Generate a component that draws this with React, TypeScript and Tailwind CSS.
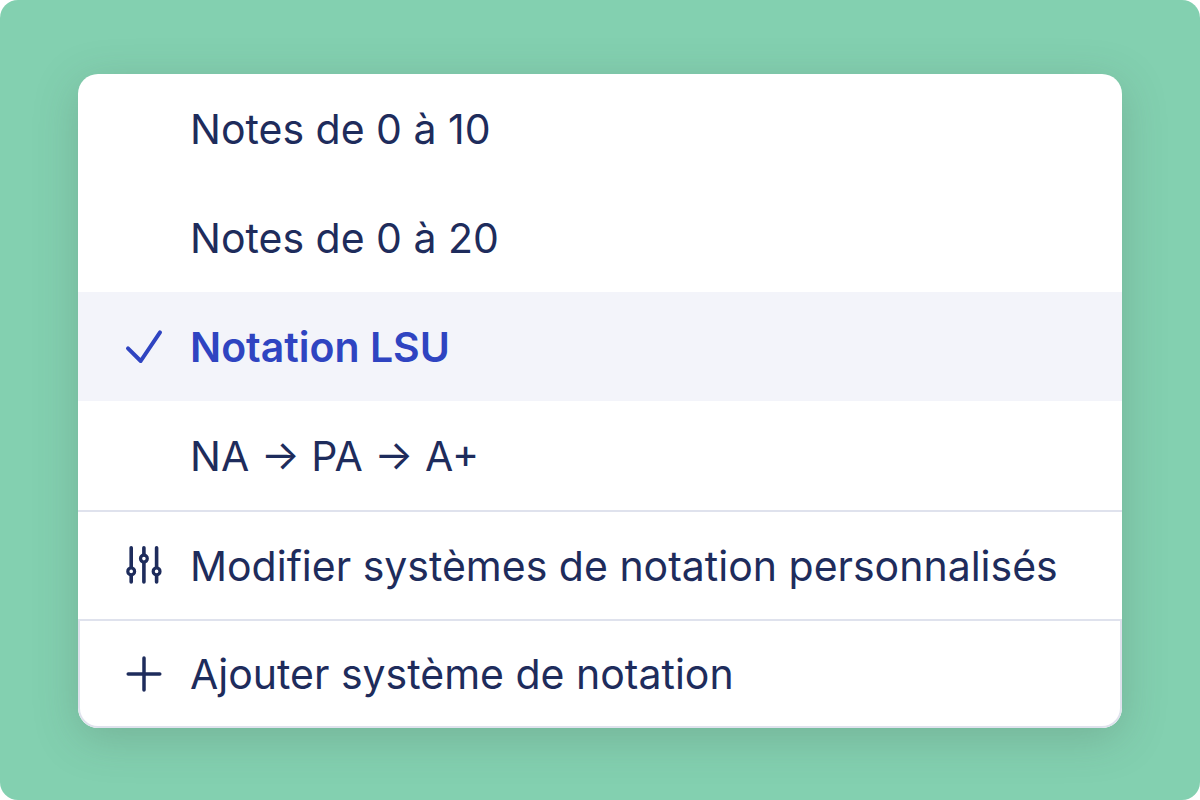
import { useState } from "react";
import type { ReactNode } from "react";
import clsx from "clsx";

const CheckIcon = () => (
  <svg className="size-10" viewBox="0 0 40 40" fill="none" stroke="currentColor" strokeWidth="4" strokeLinecap="round" strokeLinejoin="round" aria-hidden="true">
    <path d="M4 21.3 16.7 34 36 5.4" />
  </svg>
);

const SlidersIcon = () => (
  <svg className="size-10" viewBox="0 0 40 40" fill="none" stroke="currentColor" strokeWidth="3.6" strokeLinecap="round" aria-hidden="true">
    <path d="M7.2 1.8v19.4M7.2 29.5v6.4M19.9 1.8v6.4M19.9 17v18.9M32.6 1.8v19.4M32.6 29.5v6.4" />
    <circle cx="7.2" cy="25.4" r="3.4" strokeWidth="3.2" />
    <circle cx="19.9" cy="12.6" r="3.4" strokeWidth="3.2" />
    <circle cx="32.6" cy="25.4" r="3.4" strokeWidth="3.2" />
  </svg>
);

const PlusIcon = () => (
  <svg className="size-10" viewBox="0 0 40 40" fill="none" stroke="currentColor" strokeWidth="3.5" strokeLinecap="round" aria-hidden="true">
    <path d="M20 4v32M4.2 20h31.6" />
  </svg>
);

const systems = ["Notes de 0 à 10", "Notes de 0 à 20", "Notation LSU", "NA → PA → A+"];

interface MenuRowProps {
  label: string;
  icon?: ReactNode;
  selected?: boolean;
  className?: string;
  onClick?: () => void;
}

const MenuRow = ({ label, icon, selected, className = "h-[109px] px-[46px]", onClick }: MenuRowProps) => (
  <button
    type="button"
    onClick={onClick}
    aria-pressed={selected}
    className={clsx(
      "flex w-full items-center gap-[26px] text-left",
      selected ? "bg-[#f3f4fa] font-semibold text-[#2f44c1]" : "text-[#1e2c5c]",
      className
    )}
  >
    <span className="size-10 shrink-0">{icon}</span>
    <span>{label}</span>
  </button>
);

export default function App() {
  const [current, setCurrent] = useState("Notation LSU");

  return (
    <div className="bg-white">
      <main className="flex min-h-screen items-center rounded-[18px] bg-[#83d0b0] px-[78px] pt-[2px] font-['Inter',sans-serif] text-[41px] leading-[48px]">
        <div className="w-full overflow-hidden rounded-[20px] bg-white shadow-[0_10px_44px_rgba(70,90,80,0.25)]">
          {systems.map((name) => (
            <MenuRow
              key={name}
              label={name}
              selected={name === current}
              icon={name === current ? <CheckIcon /> : null}
              onClick={() => setCurrent(name)}
            />
          ))}
          <MenuRow
            label="Modifier systèmes de notation personnalisés"
            icon={<SlidersIcon />}
            className="h-[111px] border-y-2 border-[#dfe2ed] px-[46px]"
          />
          <MenuRow
            label="Ajouter système de notation"
            icon={<PlusIcon />}
            className="h-[107px] rounded-b-[20px] border-x-2 border-b-2 border-[#dfe2ed] px-[44px]"
          />
        </div>
      </main>
    </div>
  );
}
